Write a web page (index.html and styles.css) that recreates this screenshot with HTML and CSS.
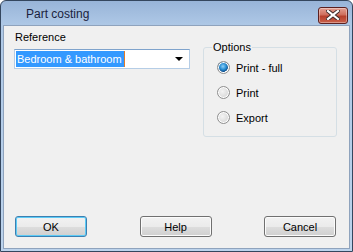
FILE: index.html
```html
<!DOCTYPE html>
<html lang="en">
<head>
    <meta charset="UTF-8">
    <title>Part costing</title>
    <link rel="stylesheet" href="styles.css">
</head>
<body>
    <div class="window">
        <div class="titlebar">
            <span class="title">Part costing</span>
            <button class="close-btn" title="Close">
                <svg width="14" height="10" viewBox="0 0 14 10">
                    <path d="M2 1 L12 9 M12 1 L2 9" stroke="#3b2a2a" stroke-width="4" stroke-linecap="square"/>
                    <path d="M2 1 L12 9 M12 1 L2 9" stroke="#ffffff" stroke-width="2.2" stroke-linecap="square"/>
                </svg>
            </button>
        </div>

        <div class="client">
            <div class="top">
                <div class="ref-col">
                    <label class="label">Reference</label>
                    <div class="combo">
                        <span class="combo-text">Bedroom &amp; bathroom</span>
                        <span class="combo-arrow"></span>
                    </div>
                </div>

                <fieldset class="options">
                    <legend>Options</legend>
                    <div class="radio-row">
                        <span class="radio checked"></span>
                        <span>Print - full</span>
                    </div>
                    <div class="radio-row">
                        <span class="radio"></span>
                        <span>Print</span>
                    </div>
                    <div class="radio-row">
                        <span class="radio"></span>
                        <span>Export</span>
                    </div>
                </fieldset>
            </div>

            <div class="buttons">
                <button class="btn default">OK</button>
                <button class="btn">Help</button>
                <button class="btn">Cancel</button>
            </div>
        </div>
    </div>
</body>
</html>
```

FILE: styles.css
```css
body { margin: 0; background: #ffffff; }

.window {
    width: 353px;
    height: 252px;
    box-sizing: border-box;
    border: 1px solid #34465e;
    border-radius: 6px 6px 0 0;
    background: linear-gradient(#98b4d8 0px, #aec8e6 24px, #bcd3ec 252px);
    padding: 0 2px 2px 2px;
    display: flex;
    flex-direction: column;
}

.titlebar {
    height: 24px;
    display: flex;
    align-items: center;
    justify-content: space-between;
    padding: 0 2px 0 23px;
}
.title {
    font-family: "Liberation Sans", Arial, sans-serif;
    font-size: 12px;
    color: #1a1f3d;
    margin-top: 2px;
}

.close-btn {
    width: 30px;
    height: 17px;
    margin-top: 4px;
    padding: 0;
    border: 1px solid #5b2020;
    border-radius: 3px;
    background: linear-gradient(#e3a093 0%, #cf6f5d 45%, #b6402c 55%, #c9604a 100%);
    box-shadow: inset 0 0 0 1px rgba(255, 255, 255, 0.35);
    display: flex;
    align-items: center;
    justify-content: center;
}

.client {
    flex: 1;
    background: #f0f0f0;
    border: 1px solid #8fa3bd;
    display: flex;
    flex-direction: column;
    padding: 4px 13px 11px 11px;
    font-family: "Liberation Sans", Arial, sans-serif;
    font-size: 11px;
    color: #000000;
}

.top { display: flex; justify-content: space-between; }

.ref-col { display: flex; flex-direction: column; padding-top: 1px; margin-left: -1px; }
.label { line-height: 13px; margin-left: 1px; }

.combo {
    margin-top: 5px;
    width: 176px;
    height: 20px;
    box-sizing: border-box;
    background: #ffffff;
    border: 1px solid #b5cde6;
    border-top-color: #7fa3cc;
    display: flex;
    align-items: center;
    justify-content: space-between;
    padding: 0 6px 0 1px;
}
.combo-text {
    background: #3399ff;
    color: #ffffff;
    line-height: 16px;
    padding: 0 2px 0 1px;
    border-right: 1px solid #e07b2a;
}
.combo-arrow {
    width: 0;
    height: 0;
    border-left: 4px solid transparent;
    border-right: 4px solid transparent;
    border-top: 4px solid #000000;
}

.options {
    margin: 11px -1px 0 0;
    width: 134px;
    height: 96px;
    box-sizing: border-box;
    border: 1px solid #d5dfe5;
    border-radius: 3px;
    padding: 0 0 0 8px;
}
.options legend { padding: 0 1px; line-height: 13px; }

.radio-row {
    display: flex;
    align-items: center;
    gap: 6px;
    height: 25px;
    margin-left: 5px;
}
.radio-row:first-of-type { margin-top: 1px; }

.radio {
    width: 13px;
    height: 13px;
    box-sizing: border-box;
    border-radius: 50%;
    border: 1px solid #8f8f8f;
    background: radial-gradient(circle at 40% 40%, #f4f4f4 0, #e2e2e2 45%, #cfcfcf 100%);
    box-shadow: inset 0 0 0 1px #ffffff;
}
.radio.checked {
    background: radial-gradient(circle at 45% 40%, #8fd0f7 0, #2a8fd4 35%, #0e4e8c 60%, #e8e8e8 62%, #d4d4d4 100%);
}

.buttons {
    margin-top: auto;
    display: flex;
    justify-content: space-between;
}
.btn {
    width: 72px;
    height: 21px;
    padding: 0;
    font-family: "Liberation Sans", Arial, sans-serif;
    font-size: 11px;
    color: #000000;
    border: 1px solid #707070;
    border-radius: 3px;
    background: linear-gradient(#f2f2f2 0%, #ebebeb 50%, #dddddd 51%, #cfcfcf 100%);
    box-shadow: inset 0 0 0 1px #fbfbfb;
}
.btn.default {
    border-color: #3c7fb1;
    box-shadow: inset 0 0 0 1px #5ccbf6;
}
```
